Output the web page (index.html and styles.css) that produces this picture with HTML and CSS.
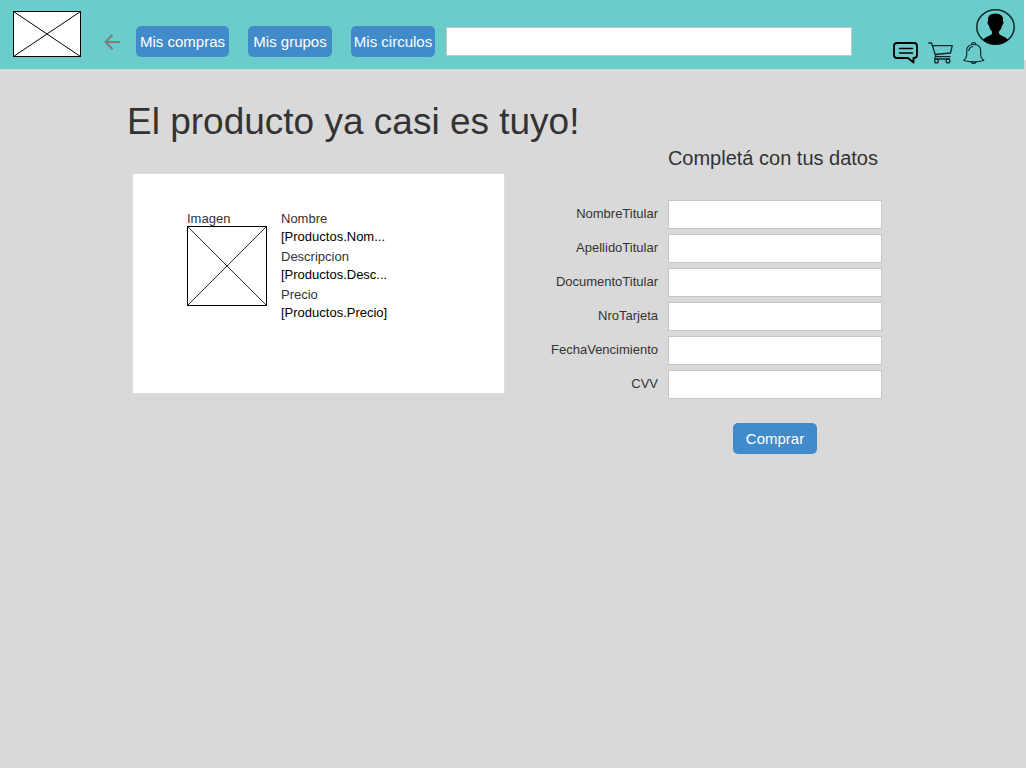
FILE: index.html
```html
<!DOCTYPE html>
<html lang="es">
<head>
<meta charset="utf-8">
<title>El producto ya casi es tuyo</title>
<link rel="stylesheet" href="styles.css">
</head>
<body>
<header class="topbar">
  <svg class="logo" viewBox="0 0 68 46" role="img" aria-label="Logo"><rect x=".5" y=".5" width="67" height="45" fill="#fff" stroke="#000"/><path d="M.5 .5l67 45M67.500 .5l-67 45" stroke="#000" fill="none"/></svg>
  <button class="icon-button back" type="button" aria-label="Volver"><svg width="16" height="16" viewBox="0 0 16 16" fill="none" stroke="#7d7d7d" stroke-width="2"><path d="M8.500 .8L1.500 8l7 7.200M1.500 8H16"/></svg></button>
  <nav class="nav">
    <button class="button button-wide" type="button">Mis compras</button>
    <button class="button" type="button">Mis grupos</button>
    <button class="button" type="button">Mis circulos</button>
  </nav>
  <input class="field search" type="text" aria-label="Buscar">
  <div class="actions">
    <button class="icon-button" type="button" aria-label="Mensajes"><svg width="26" height="22" viewBox="0 0 26 22" fill="none" stroke="#000" stroke-width="1.800" stroke-linejoin="round" stroke-linecap="round"><path d="M4 1h17q3 0 3 3v9q0 3-3 3h-.5v4.500L15 16H4q-3 0-3-3V4q0-3 3-3z"/><path d="M6.500 6.500h13M6.500 11h13" stroke-width="1.500"/></svg></button>
    <button class="icon-button" type="button" aria-label="Carrito"><svg width="26" height="22" viewBox="0 0 26 22" fill="none" stroke="#10292b" stroke-width="1.300" stroke-linejoin="round"><path d="M.3 1h3.200L8 14.700h14.500M4.300 3.700h20L22.500 11 7 12.500M8 14.700q-2 .5-.8 2.300H22"/><circle cx="8.500" cy="19" r="1.900"/><circle cx="20" cy="19" r="1.900"/></svg></button>
    <button class="icon-button" type="button" aria-label="Notificaciones"><svg width="22" height="22" viewBox="0 0 22 22" fill="none" stroke="#10292b" stroke-width="1.200" stroke-linejoin="round"><path d="M.8 18.500q2.700-2 2.900-5.500V9q0-6.500 7-6.500t7 6.500v4q.2 3.500 3.100 5.500-4.500 1.300-10.100 1.300T.8 18.500zM8.500 2.700q0-2 2.200-2t2.200 2M7.800 19.700q1 1.800 2.900 1.800t2.900-1.800M5.700 9q.3-4 4.500-4.500"/></svg></button>
  </div>
  <button class="icon-button profile" type="button" aria-label="Perfil"><svg width="40" height="37" viewBox="0 0 40 37"><ellipse cx="19.500" cy="19" rx="18.700" ry="17.200" fill="none" stroke="#12282a" stroke-width="1.500"/><path d="M7 32q1.500-2.500 5.500-4 3.500-1.200 3.500-2.500v-2q-2.500-2.200-3-5.700-1.500-.8-1.500-3.500 0-1 .5-1.500Q11.200 5.500 19.500 5.500t7.500 7.300q.5.500.5 1.500 0 2.700-1.500 3.500-.5 3.500-3 5.700v2q0 1.300 3.500 2.500 4 1.500 5.500 4-5 4.500-12.500 4.500T7 32z"/></svg></button>
</header>
<main class="content">
  <section class="product">
    <h1 class="title">El producto ya casi es tuyo!</h1>
    <article class="card">
      <figure class="picture">
        <figcaption>Imagen</figcaption>
        <svg width="80" height="80" viewBox="0 0 80 80" fill="none" stroke="#000"><rect x=".5" y=".5" width="79" height="79"/><path d="M.5 .5l79 79M79.500 .5l-79 79" stroke-width=".8"/></svg>
      </figure>
      <dl class="details">
        <dt>Nombre</dt><dd>[Productos.Nom...</dd>
        <dt>Descripcion</dt><dd>[Productos.Desc...</dd>
        <dt>Precio</dt><dd>[Productos.Precio]</dd>
      </dl>
    </article>
  </section>
  <form class="payment">
    <h2 class="subtitle">Completá con tus datos</h2>
    <div class="rows">
      <label for="nombre">NombreTitular</label><input class="field" id="nombre" type="text">
      <label for="apellido">ApellidoTitular</label><input class="field" id="apellido" type="text">
      <label for="documento">DocumentoTitular</label><input class="field" id="documento" type="text">
      <label for="tarjeta">NroTarjeta</label><input class="field" id="tarjeta" type="text">
      <label for="vencimiento">FechaVencimiento</label><input class="field" id="vencimiento" type="text">
      <label for="cvv">CVV</label><input class="field" id="cvv" type="text">
    </div>
    <button class="button submit" type="button">Comprar</button>
  </form>
</main>
</body>
</html>
```
FILE: styles.css
```css
* {
  box-sizing: border-box;
}

body {
  margin: 0;
  background: #d9d9d9;
  color: #333;
  font: 13px/18px "Liberation Sans", Arial, sans-serif;
}

.topbar {
  position: relative;
  display: flex;
  align-items: flex-start;
  height: 69px;
  margin-right: 2px;
  padding: 0 8px 0 13px;
  background: #6bcdcb;
}

/* light edge beside the bar */
.topbar::after {
  content: "";
  position: absolute;
  top: 0;
  right: -2px;
  width: 2px;
  height: 60px;
  background: #fff;
}

.logo {
  width: 68px;
  height: 46px;
  margin-top: 11px;
  flex: none;
}

.icon-button {
  display: block;
  padding: 0;
  border: 0;
  background: none;
}

.icon-button svg {
  display: block;
}

.back {
  margin: 34px 16px 0 23px;
}

.nav {
  display: flex;
  gap: 19px;
  margin-top: 26px;
}

.button {
  width: 84px;
  height: 31px;
  padding: 0;
  border: 0;
  border-radius: 5px;
  background: #428bca;
  color: #fff;
  font: 15px/31px "Liberation Sans", Arial, sans-serif;
  white-space: nowrap;
}

.button-wide {
  width: 93px;
}

.field {
  width: 100%;
  height: 29px;
  padding: 0 8px;
  border: 1px solid #c6c6c6;
  background: #fff;
  font: inherit;
}

.search {
  flex: 1;
  min-width: 0;
  margin: 27px 41px 0 11px;
}

.actions {
  display: flex;
  gap: 9px;
  margin-top: 42px;
}

.profile {
  margin: 8px 0 0 -9px;
}

.content {
  display: grid;
  grid-template-columns: 414px minmax(0, 341px);
  justify-content: center;
  padding: 29px 17px 0 0;
}

.title {
  margin: 0;
  font-size: 37px;
  line-height: 48px;
  font-weight: 400;
  white-space: nowrap;
}

.card {
  display: flex;
  gap: 14px;
  width: 373px;
  min-height: 221px;
  margin: 27px 0 0 5px;
  padding: 36px 54px;
  border: 1px solid #dedede;
  background: #fff;
}

.picture {
  width: 80px;
  margin: 0;
}

.picture svg {
  display: block;
  margin-top: -2px;
}

.details {
  margin: 0;
}

.details dd {
  margin: 0 0 2px;
  color: #000;
}

.payment {
  padding-top: 48px;
  display: flex;
  flex-direction: column;
}

.subtitle {
  align-self: flex-end;
  margin: 0 4px 0 0;
  font-size: 20px;
  line-height: 24px;
  font-weight: 400;
}

.rows {
  display: grid;
  grid-template-columns: 1fr 214px;
  gap: 5px 10px;
  margin-top: 30px;
  text-align: right;
}

.rows label {
  padding-top: 5px;
}

.submit {
  align-self: flex-end;
  margin: 24px 65px 0 0;
}
```
